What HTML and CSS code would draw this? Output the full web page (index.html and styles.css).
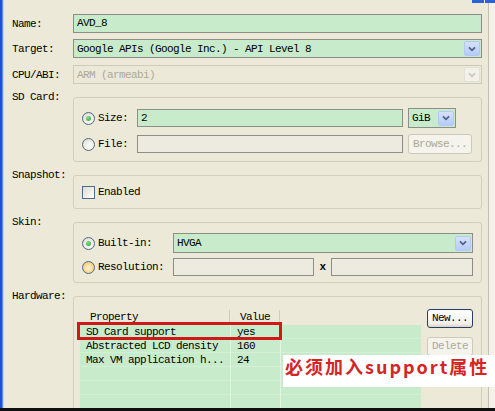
FILE: index.html
```html
<!DOCTYPE html>
<html>
<head>
<meta charset="utf-8">
<link rel="stylesheet" href="styles.css">
</head>
<body>
<div class="screen">
  <div class="window">
    <div class="edge-left"></div>
    <div class="form">
      <div class="row r-name">
        <span class="label">Name:</span>
        <div class="field green">AVD_8</div>
      </div>
      <div class="row r-target">
        <span class="label">Target:</span>
        <div class="combo green">
          <span class="combo-text">Google APIs (Google Inc.) - API Level 8</span>
          <span class="drop"><svg viewBox="0 0 16 16" width="16" height="16"><path d="M4.5 6.2 L8 9.5 L11.5 6.2" fill="none" stroke="#4D6185" stroke-width="2"/></svg></span>
        </div>
      </div>
      <div class="row r-cpu">
        <span class="label">CPU/ABI:</span>
        <div class="combo disabled">
          <span class="combo-text">ARM (armeabi)</span>
          <span class="drop off"><svg viewBox="0 0 16 16" width="16" height="16"><path d="M4.5 6.2 L8 9.5 L11.5 6.2" fill="none" stroke="#C9C7BA" stroke-width="2"/></svg></span>
        </div>
      </div>
      <div class="row grouped r-sd">
        <span class="label">SD Card:</span>
        <div class="group">
          <div class="opts sd">
            <label class="opt"><span class="radio on"></span>Size:</label>
            <div class="field green small">2</div>
            <div class="cell3">
              <div class="combo green gib">
                <span class="combo-text">GiB</span>
                <span class="drop"><svg viewBox="0 0 16 16" width="16" height="16"><path d="M4.5 6.2 L8 9.5 L11.5 6.2" fill="none" stroke="#4D6185" stroke-width="2"/></svg></span>
              </div>
            </div>
            <label class="opt"><span class="radio"></span>File:</label>
            <div class="field plain small"></div>
            <div class="cell3"><div class="btn off browse">Browse...</div></div>
          </div>
        </div>
      </div>
      <div class="row grouped r-snap">
        <span class="label">Snapshot:</span>
        <div class="group">
          <div class="snap">
            <label class="opt"><span class="check"></span>Enabled</label>
          </div>
        </div>
      </div>
      <div class="row grouped r-skin">
        <span class="label">Skin:</span>
        <div class="group">
          <div class="opts skin">
            <label class="opt"><span class="radio on"></span>Built-in:</label>
            <div class="combo green span3">
              <span class="combo-text">HVGA</span>
              <span class="drop"><svg viewBox="0 0 16 16" width="16" height="16"><path d="M4.5 6.2 L8 9.5 L11.5 6.2" fill="none" stroke="#4D6185" stroke-width="2"/></svg></span>
            </div>
            <label class="opt"><span class="radio hover"></span>Resolution:</label>
            <div class="field plain small"></div>
            <span class="times">x</span>
            <div class="field plain small"></div>
          </div>
        </div>
      </div>
      <div class="row grouped r-hw">
        <span class="label">Hardware:</span>
        <div class="group">
          <div class="hw">
            <div class="table">
              <div class="thead">
                <span class="th">Property</span>
                <span class="th">Value</span>
                <span class="th last"></span>
              </div>
              <div class="tbody">
                <div class="tr"><span class="td">SD Card support</span><span class="td v">yes</span></div>
                <div class="tr"><span class="td">Abstracted LCD density</span><span class="td v">160</span></div>
                <div class="tr"><span class="td">Max VM application h...</span><span class="td v">24</span></div>
              </div>
              <div class="highlight"></div>
            </div>
            <div class="btns">
              <div class="btn">New...</div>
              <div class="btn off">Delete</div>
            </div>
          </div>
        </div>
      </div>
    </div>
    <div class="edge-right"></div>
    <div class="corner"></div>
    <div class="note">必须加入support属性</div>
  </div>
  <div class="bottom-line"></div>
</div>
</body>
</html>
```

FILE: styles.css
```css
* { box-sizing: border-box; }
html, body { margin: 0; padding: 0; }
body {
  background: #ECE9D8;
  font-family: "Liberation Mono", "DejaVu Sans Mono", monospace;
  font-size: 11px;
  letter-spacing: -0.6px;
  color: #000;
}
.screen {
  width: 495px;
  height: 411px;
  display: flex;
  flex-direction: column;
  overflow: hidden;
}
.window {
  position: relative;
  height: 408px;
  display: flex;
  overflow: hidden;
}
.edge-left {
  flex: none;
  width: 4px;
  background: linear-gradient(to right, #1B52D4 0, #1B52D4 2px, #5E8DEB 2px, #5E8DEB 3px, #C7D3EE 3px);
}
.edge-right {
  flex: 1;
  background: linear-gradient(to right, transparent 0, transparent 6px, #C3C0AF 6px, #C3C0AF 7px, #F3F1E8 7px);
}
.corner {
  position: absolute;
  top: 0;
  right: 0;
  width: 23px;
  height: 3px;
  background: linear-gradient(to right, #2A63D8 0, #2A63D8 12px, #E8EEFB 12px, #E8EEFB 13px, #2A63D8 13px);
}
.bottom-line {
  height: 3px;
  background: #101010;
}
.form {
  flex: none;
  width: 478px;
  padding: 14px 0 0 8px;
  display: flex;
  flex-direction: column;
}
.row {
  display: grid;
  grid-template-columns: 61px 409px;
  align-items: center;
}
.r-target { margin-top: 6px; }
.r-cpu { margin-top: 7px; }
.r-sd, .r-snap, .r-skin, .r-hw { margin-top: 13px; }
.label {
  line-height: 14px;
  white-space: nowrap;
}
.grouped { align-items: start; }
.grouped .label { margin-top: -7px; }

.field {
  height: 19px;
  border: 1px solid #8D8E8A;
  padding: 0 3px;
  line-height: 17px;
  white-space: nowrap;
  overflow: hidden;
}
.field.small { height: 18px; line-height: 16px; }
.green { background: #C8EBCB; }
.plain { background: #EDEBE0; }

.combo {
  height: 19px;
  border: 1px solid #8D8E8A;
  display: flex;
  align-items: center;
  padding: 0 1px 0 3px;
}
.combo.disabled {
  border-color: #CECBBB;
  background: #ECE9D8;
  color: #ACA899;
}
.combo-text { flex: 1; white-space: nowrap; overflow: hidden; }
.drop {
  flex: none;
  width: 16px;
  height: 15px;
  border: 1px solid #B4C8F4;
  border-radius: 2px;
  background: linear-gradient(#D6E1FC, #B7CBF7);
  display: flex;
  align-items: center;
  justify-content: center;
}
.drop svg { display: block; }
.drop.off {
  background: #F2F1EA;
  border-color: #E3E1D6;
}

.group {
  border: 1px solid #D2CFBE;
  border-radius: 3px;
}
.opts {
  display: grid;
  align-items: center;
}
.opts.sd {
  grid-template-columns: 56px 266px 70px;
  grid-auto-rows: 20px;
  row-gap: 6px;
  padding: 10px 8px 7px 7px;
}
.cell3 { padding-left: 5px; }
.gib { width: 48px; height: 20px; }
.opt {
  display: flex;
  align-items: center;
  white-space: nowrap;
  line-height: 14px;
}
.radio {
  flex: none;
  width: 13px;
  height: 13px;
  margin: 0 3px 0 1px;
  border: 1px solid #4E6A86;
  border-radius: 50%;
  background: radial-gradient(circle at 60% 65%, #FFFFFF 0, #F1F0EA 40%, #D4D3CB 100%);
  display: flex;
  align-items: center;
  justify-content: center;
}
.radio.on::after {
  content: "";
  width: 5px;
  height: 5px;
  border-radius: 50%;
  background: radial-gradient(circle at 40% 35%, #8BE08B, #21A121);
}
.radio.hover {
  background: radial-gradient(circle at 50% 55%, #FDF3D6 0, #F9D48C 60%, #E3A548 100%);
}
.check {
  flex: none;
  width: 13px;
  height: 13px;
  margin: 0 3px 0 1px;
  border: 1px solid #4E6A86;
  background: linear-gradient(135deg, #DCDCD4, #FFFFFF);
}
.btn {
  height: 19px;
  border: 1px solid #2A3F5E;
  border-radius: 3px;
  background: linear-gradient(#FFFFFF, #F1F0EA 80%, #D8D2C5);
  text-align: center;
  line-height: 17px;
  white-space: nowrap;
}
.btn.off {
  border-color: #CDCAB9;
  background: #F4F3EC;
  color: #ACA899;
}
.browse { width: 64px; height: 20px; line-height: 18px; }

.snap {
  padding: 9px 7px 8px;
  height: 32px;
}

.opts.skin {
  grid-template-columns: 92px 141px 17px 142px;
  grid-template-rows: 20px 18px;
  row-gap: 5px;
  padding: 10px 8px 6px 7px;
}
.span3 { grid-column: span 3; height: 20px; }
.times { text-align: center; font-weight: bold; }

.hw {
  display: flex;
  gap: 6px;
  padding: 12px 8px 0 6px;
  height: 140px;
}
.table {
  position: relative;
  width: 341px;
  flex: none;
  display: flex;
  flex-direction: column;
}
.thead {
  display: grid;
  grid-template-columns: 150px 50px 1fr;
  height: 16px;
  line-height: 16px;
}
.th { padding-left: 10px; border-right: 1px solid #CFCCBD; margin: 1px 0; line-height: 14px; }
.th.last { border-right: none; }
.tbody {
  flex: 1;
  background:
    linear-gradient(#E2F4E3, #E2F4E3) 150px 0 / 1px 100% no-repeat,
    linear-gradient(#E2F4E3, #E2F4E3) 200px 0 / 1px 100% no-repeat,
    repeating-linear-gradient(#C8EBCB 0, #C8EBCB 13px, #D3EFD5 13px, #D3EFD5 14px);
}
.tr {
  display: grid;
  grid-template-columns: 150px 50px;
  height: 14px;
  line-height: 14px;
}
.td { padding-left: 6px; white-space: nowrap; }
.td.v { padding-left: 7px; }
.highlight {
  position: absolute;
  left: -3px;
  top: 13px;
  width: 205px;
  height: 18px;
  border: 3px solid #D01818;
}
.btns {
  width: 46px;
  display: flex;
  flex-direction: column;
  gap: 9px;
}
.btns .btn { height: 19px; }

.note {
  position: absolute;
  left: 283px;
  top: 355px;
  width: 212px;
  height: 32px;
  background: #FFFFFF;
  padding-left: 2px;
  font-family: "Noto Sans CJK SC", "Noto Sans", sans-serif;
  font-size: 18px;
  font-weight: 700;
  letter-spacing: 2px;
  line-height: 22px;
  color: #D42424;
  white-space: nowrap;
}
```
